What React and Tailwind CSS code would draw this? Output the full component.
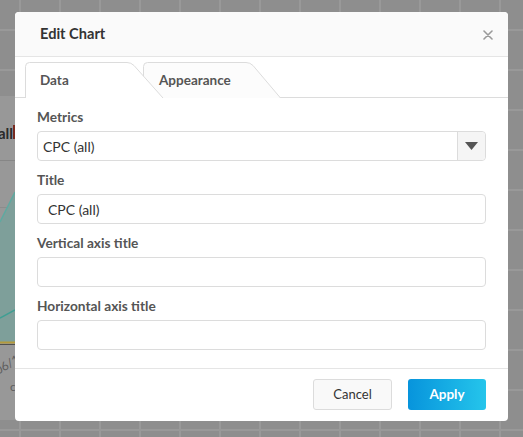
export default function App() {
  const label = "block h-[16px] leading-[16px] text-[13.7px] font-bold text-[#555] mb-[6px]";
  const input = "h-[30px] w-full border border-[#dcdcdc] rounded-[4px] bg-white flex items-center text-[14px] text-[#333]";
  return (
    <div className="relative w-[523px] h-[437px] overflow-hidden bg-[#8e8e8e] font-['Lato',sans-serif]">
      <div className="absolute inset-0 bg-[linear-gradient(to_right,#999999_2px,transparent_2px),linear-gradient(to_bottom,#999999_2px,transparent_2px)] bg-[size:40px_40px] bg-[position:19px_29px]" />
      {/* background chart card peeking on the left */}
      <div className="absolute left-0 top-[96px] w-[15px] h-[324px] bg-[#989898] overflow-hidden">
        <svg width="15" height="324" className="absolute left-0 top-0">
          <line x1="0" y1="64.5" x2="15" y2="64.5" stroke="#868686" />
          <line x1="0" y1="111.5" x2="15" y2="111.5" stroke="#8c8c8c" />
          <line x1="0" y1="157.5" x2="15" y2="157.5" stroke="#8c8c8c" />
          <line x1="0" y1="204.5" x2="15" y2="204.5" stroke="#8c8c8c" />
          <polygon points="0,126 15,96 15,246 0,246" fill="#7e9f9a" />
          <line x1="0" y1="126" x2="15" y2="96" stroke="#5fa9a0" strokeWidth="1.5" />
          <line x1="0" y1="222" x2="15" y2="214" stroke="#3f9f93" strokeWidth="1.5" />
          <line x1="0" y1="246.5" x2="15" y2="246.5" stroke="#b49a3c" strokeWidth="2" />
          <line x1="0" y1="248.5" x2="15" y2="248.5" stroke="#505050" strokeWidth="1" />
        </svg>
        <span className="absolute right-[2px] top-[28px] text-[15px] font-bold text-[#2a2a2a] leading-[18px]">all</span>
        <span className="absolute right-0 top-[29px] w-[2px] h-[14px] bg-[#7a2a20]" />
        <span className="absolute left-[-6px] top-[262px] text-[12px] text-[#5e5e5e] leading-[14px] rotate-[-30deg]">06/1</span>
        <span className="absolute left-[10px] top-[284px] text-[12px] text-[#5e5e5e] leading-[14px]">c</span>
      </div>

      {/* modal */}
      <div className="absolute left-[15px] top-[12px] w-[493px] rounded-[4px] bg-white overflow-hidden flex flex-col">
        <div className="h-[45px] bg-[#fafafa] border-b border-[#e5e5e5] flex items-center justify-between pl-[25px] pr-[15px]">
          <span className="text-[14.6px] font-bold text-[#333]">Edit Chart</span>
          <svg width="10" height="10" viewBox="0 0 10 10" className="mt-[1px]">
            <path d="M1 1 L9 9 M9 1 L1 9" stroke="#9a9a9a" strokeWidth="1.6" strokeLinecap="round" />
          </svg>
        </div>

        <div className="h-[41px] border-b border-[#dcdcdc] pl-[10px] pt-[5px] flex">
          <div className="relative z-10 w-[139px] h-[36px] flex items-center pl-[15px]">
            <svg width="139" height="37" className="absolute left-0 top-0">
              <path d="M0.5 37 V4.5 Q0.5 0.5 4.5 0.5 H102 Q106 0.5 109 3.5 L138.5 37 Z" fill="#ffffff" stroke="none" />
              <path d="M0.5 36 V4.5 Q0.5 0.5 4.5 0.5 H102 Q106 0.5 109 3.5 L138 36" fill="none" stroke="#dcdcdc" />
            </svg>
            <span className="relative text-[13.5px] font-bold text-[#555]">Data</span>
          </div>
          <div className="relative -ml-[21px] w-[138px] h-[36px] flex items-center pl-[16px]">
            <svg width="138" height="36" className="absolute left-0 top-0">
              <path d="M0.5 36 V4.5 Q0.5 0.5 4.5 0.5 H103 Q107 0.5 110 3.5 L137.5 36" fill="#fcfcfc" stroke="#dcdcdc" />
            </svg>
            <span className="relative text-[13.5px] font-bold text-[#555]">Appearance</span>
          </div>
        </div>

        <div className="px-[22px] pt-[11px] pb-[18px] flex flex-col gap-[11px]">
          <div>
            <span className={label}>Metrics</span>
            <div className={input + " justify-between"}>
              <span className="pl-[5px]">CPC (all)</span>
              <div className="h-full w-[28px] border-l border-[#dcdcdc] bg-[#f5f5f5] rounded-r-[4px] flex items-center justify-center">
                <svg width="13" height="8" viewBox="0 0 13 8">
                  <path d="M0 0 H13 L6.5 8 Z" fill="#555" />
                </svg>
              </div>
            </div>
          </div>
          <div>
            <span className={label}>Title</span>
            <div className={input}>
              <span className="pl-[10px]">CPC (all)</span>
            </div>
          </div>
          <div>
            <span className={label}>Vertical axis title</span>
            <div className={input} />
          </div>
          <div>
            <span className={label}>Horizontal axis title</span>
            <div className={input} />
          </div>
        </div>

        <div className="border-t border-[#e5e5e5] pt-[10px] pb-[11px] pr-[22px] flex justify-end gap-[16px]">
          <button className="w-[79px] h-[31px] rounded-[3px] border border-[#dcdcdc] bg-[#f9f9f9] text-[13px] text-[#333]">Cancel</button>
          <button className="w-[78px] h-[31px] rounded-[3px] bg-[linear-gradient(to_right,#0794dc,#25c5eb)] text-[13.5px] font-bold text-white">Apply</button>
        </div>
      </div>
    </div>
  );
}
